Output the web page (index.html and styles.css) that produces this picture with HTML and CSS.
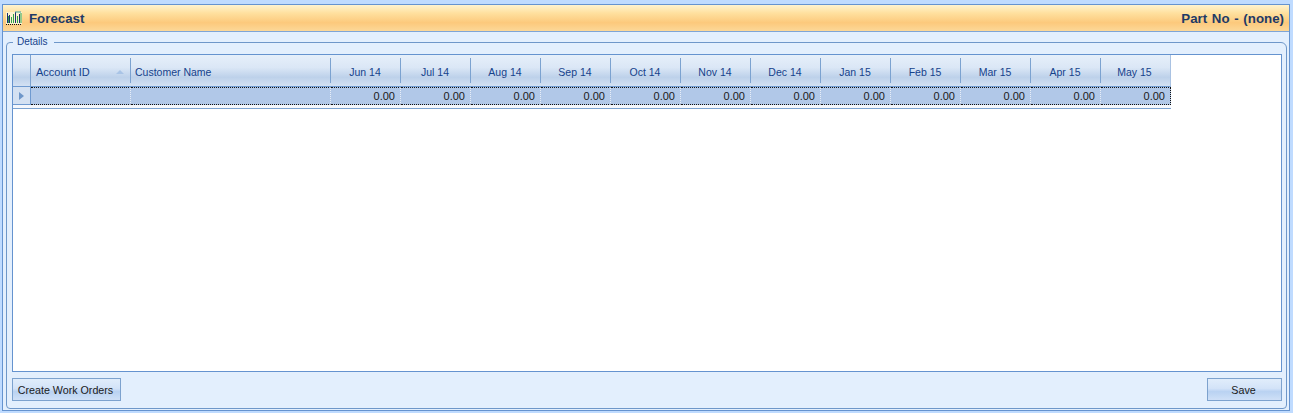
FILE: index.html
```html
<!DOCTYPE html>
<html lang="en">
<head>
<meta charset="utf-8">
<title>Forecast</title>
<link rel="stylesheet" href="styles.css">
</head>
<body>
<div class="window">
  <header class="title">
    <div class="title-left">
      <svg class="icon" width="16" height="16" viewBox="0 0 16 16" aria-hidden="true">
        <path d="M0 2h16v12H0z" fill="#fbf3cf"/>
        <path d="M0 14.5h16" stroke="#111" stroke-width="1.2" stroke-dasharray="1 1"/>
        <path d="M1.5 3v10M3.5 5v8M9.5 2v11M13.5 4v9" stroke="#20306e" stroke-width="1"/>
        <path d="M2.5 6v7M5.5 7v6M7.5 4v9M11.5 6v7M15 3v10" stroke="#2fa04a" stroke-width="1"/>
        <path d="M9 2h6" stroke="#3aa0a0" stroke-width="1"/>
      </svg>
      <span>Forecast</span>
    </div>
    <span class="part">Part No - (none)</span>
  </header>
  <div class="content">
    <fieldset class="details">
      <legend>Details</legend>
      <div class="grid-box">
        <div class="grid">
          <div class="head corner"></div>
          <div class="head left first">Account ID<i class="sort"></i></div>
          <div class="head left name">Customer Name</div>
          <div class="head">Jun 14</div>
          <div class="head">Jul 14</div>
          <div class="head">Aug 14</div>
          <div class="head">Sep 14</div>
          <div class="head">Oct 14</div>
          <div class="head">Nov 14</div>
          <div class="head">Dec 14</div>
          <div class="head">Jan 15</div>
          <div class="head">Feb 15</div>
          <div class="head">Mar 15</div>
          <div class="head">Apr 15</div>
          <div class="head last">May 15</div>

          <div class="indicator"><i class="arrow"></i></div>
          <div class="cell"></div>
          <div class="cell"></div>
          <div class="cell">0.00</div>
          <div class="cell">0.00</div>
          <div class="cell">0.00</div>
          <div class="cell">0.00</div>
          <div class="cell">0.00</div>
          <div class="cell">0.00</div>
          <div class="cell">0.00</div>
          <div class="cell">0.00</div>
          <div class="cell">0.00</div>
          <div class="cell">0.00</div>
          <div class="cell">0.00</div>
          <div class="cell">0.00</div>
        </div>
      </div>
      <div class="actions">
        <button class="btn wide" type="button">Create Work Orders</button>
        <button class="btn save" type="button">Save</button>
      </div>
    </fieldset>
  </div>
</div>
</body>
</html>
```

FILE: styles.css
```css
* { box-sizing: border-box; }
html, body { margin: 0; height: 100%; }
body {
  background: #bfdbff;
  padding: 4px 3px 2px 2px;
  font-family: "Liberation Sans", Arial, sans-serif;
  font-size: 11px;
  color: #15428b;
  overflow: hidden;
}
.window {
  height: 407px;
  border: 1px solid #6593cf;
  background: #e3effd;
  display: flex;
  flex-direction: column;
}
.title {
  height: 27px;
  flex: none;
  display: flex;
  justify-content: space-between;
  align-items: center;
  padding: 0 5px 0 3px;
  background: linear-gradient(#fff3cf 0%, #ffe1a0 30%, #fcc97c 68%, #fcd898 100%);
  border-bottom: 1px solid #7fa5d6;
  font-weight: bold;
  font-size: 13.3px;
  color: #1f3a66;
}
.title-left { display: flex; align-items: center; gap: 7px; }
.part { word-spacing: 1px; }
.icon { display: block; }
.content { flex: 1; padding: 4px 2px 1px 3px; display: flex; min-height: 0; }
.details {
  flex: 1;
  min-width: 0;
  margin: 0;
  padding: 6px 4px 4px 5px;
  border: 1px solid #6e97c9;
  border-radius: 4px 6px 4px 4px;
  display: flex;
  flex-direction: column;
}
.details legend {
  padding: 0 6px 0 4px;
  margin-left: 1px;
  font-size: 10px;
  line-height: 12px;
  color: #15428b;
}
.grid-box {
  height: 318px;
  flex: none;
  background: #fff;
  border: 1px solid #6593cf;
}
.grid {
  display: grid;
  width: 1158px;
  grid-template-columns: 18px 100px 200px repeat(12, 70px);
  grid-template-rows: 32px 21px;
  background: #f4f7fc;
  border-bottom: 1px solid #7ba2d0;
}
.head {
  position: relative;
  display: flex;
  align-items: center;
  justify-content: center;
  padding: 2px 2px 0 0;
  background: linear-gradient(#e6effa 0%, #dbe7f6 40%, #bdd1ea 72%, #d3e1f3 100%);
  border-bottom: 1px solid #6f9ad0;
  font-size: 10.5px;
}
.head::after {
  content: "";
  position: absolute;
  right: 0;
  top: 3px;
  bottom: 3px;
  width: 1px;
  background: #7ba2d0;
}
.head.last::after { display: none; }
.head.last { border-right: 1px solid #a9c2e2; }
.head.corner::after { top: 0; bottom: 0; }
.head.left { justify-content: flex-start; }
.head.first { padding-left: 5px; font-size: 11px; }
.head.name { padding-left: 4px; }
.sort {
  position: absolute;
  right: 7px;
  top: 15px;
  width: 0;
  height: 0;
  border-left: 4px solid transparent;
  border-right: 4px solid transparent;
  border-bottom: 4px solid #a9c4e6;
}
.indicator {
  align-self: start;
  height: 18px;
  display: flex;
  align-items: center;
  padding-left: 6px;
  background: #d4e1f2;
  border-right: 1px solid #6f9ad0;
  border-bottom: 1px solid #6f9ad0;
}
.arrow {
  width: 0;
  height: 0;
  border-top: 4px solid transparent;
  border-bottom: 4px solid transparent;
  border-left: 5px solid #6f97c9;
}
.cell {
  align-self: start;
  height: 18px;
  padding: 1px 5px 0 0;
  text-align: right;
  color: #1a1a1a;
  font-size: 11px;
  line-height: 14px;
  background: #b1c8e8;
  border-top: 1px dotted #111;
  border-bottom: 1px dotted #111;
  border-right: 1px dotted #e8eef8;
}
.cell:last-child { border-right: 1px dotted #111; }
.actions {
  display: flex;
  justify-content: space-between;
  margin-top: 6px;
}
.btn {
  height: 23px;
  padding: 1px 2px 0 0;
  border: 1px solid #7da2ce;
  background: linear-gradient(#e1edfb 0%, #d3e3f8 45%, #b9d2f2 60%, #cfe0f7 100%);
  font-family: "Liberation Sans", Arial, sans-serif;
  font-size: 10.7px;
  color: #1a1a1a;
}
.btn.wide { width: 109px; }
.btn.save { width: 75px; }
```
